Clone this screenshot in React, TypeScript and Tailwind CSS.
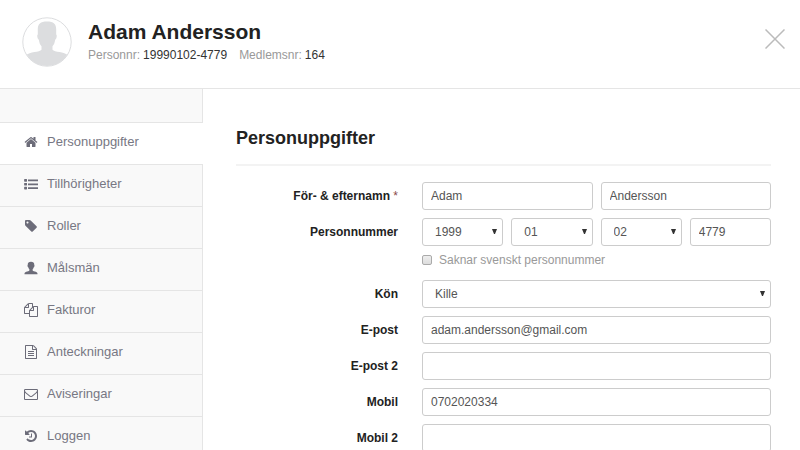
import React from "react";

interface NavItem {
  label: string;
  path: string;
  active?: boolean;
}

// Icon outlines live on a 1792 unit grid
const NAV_ITEMS: NavItem[] = [
  {
    label: "Personuppgifter",
    active: true,
    path: "M1472 992v480q0 26-19 45t-45 19h-384v-384H768v384H384q-26 0-45-19t-19-45V992q0-1 .5-3t.5-3l575-474 575 474q1 2 1 6zm223-69l-62 74q-8 9-21 11h-3q-13 0-21-7L896 424l-692 577q-12 8-24 7-13-2-21-11l-62-74q-8-10-7-23.500t11-21.500l719-599q32-26 76-26t76 26l244 204V288q0-14 9-23t23-9h192q14 0 23 9t9 23v408l219 182q10 8 11 21.500t-7 23.500z",
  },
  {
    label: "Tillhörigheter",
    path: "M80 256h256l48 48v240l-48 48H80l-64-48V304zM512 320h1280v224H512zM80 752h256l48 48v240l-48 48H80l-64-48V800zM512 816h1280v224H512zM80 1248h256l48 48v240l-48 48H80l-64-48V1296zM512 1312h1280v224H512z",
  },
  {
    label: "Roller",
    path: "M576 448q0-53-37.500-90.500T448 320t-90.500 37.500T320 448t37.500 90.500T448 576t90.500-37.500T576 448zm1067 576q0 53-37 90l-491 492q-39 37-91 37-53 0-90-37L219 890q-38-37-64.500-101T128 672V256q0-52 38-90t90-38h416q53 0 117 26.500T891 219l715 714q37 39 37 91z",
  },
  {
    label: "Målsmän",
    path: "M896 100c-270 0-430 140-420 400-60 40-30 220 50 260 30 130 80 220 160 290v150c-70 80-240 120-400 190-180 80-226 130-226 300h1672c0-170-46-220-226-300-160-70-330-110-400-190v-150c80-70 130-160 160-290 80-40 110-220 50-260 10-260-150-400-420-400z",
  },
  {
    label: "Fakturor",
    path: "M1696 384q40 0 68 28t28 68v1216q0 40-28 68t-68 28H736q-40 0-68-28t-28-68v-288H96q-40 0-68-28t-28-68V640q0-40 20-88t48-76L476 68q28-28 76-48t88-20h416q40 0 68 28t28 68v328q68-40 128-40h416zm-544 213L853 896h299V597zM512 213L213 512h299V213zm196 647l316-316V128H640v416q0 40-28 68t-68 28H128v640h512v-256q0-40 20-88t48-76zm956 804V512h-384v416q0 40-28 68t-68 28H768v640h896z",
  },
  {
    label: "Anteckningar",
    path: "M1596 380q28 28 48 76t20 88v1152q0 40-28 68t-68 28H224q-40 0-68-28t-28-68V96q0-40 28-68t68-28h896q40 0 88 20t76 48zm-444-244v376h376q-10-29-22-41l-313-313q-12-12-41-22zm384 1528V640h-416q-40 0-68-28t-28-68V128H256v1536h1280zM512 800q0-14 9-23t23-9h704q14 0 23 9t9 23v64q0 14-9 23t-23 9H544q-14 0-23-9t-9-23v-64zm736 224q14 0 23 9t9 23v64q0 14-9 23t-23 9H544q-14 0-23-9t-9-23v-64q0-14 9-23t23-9h704zm0 256q14 0 23 9t9 23v64q0 14-9 23t-23 9H544q-14 0-23-9t-9-23v-64q0-14 9-23t23-9h704z",
  },
  {
    label: "Aviseringar",
    path: "M1664 1504V736q-32 36-69 66-268 206-426 338-51 43-83 67t-86.500 48.500T897 1280h-2q-48 0-102.500-24.500T706 1207t-83-67Q465 1008 197 802q-37-30-69-66v768q0 13 9.500 22.500T160 1536h1472q13 0 22.500-9.500t9.500-22.500zm0-1051q0-37-9-53t-23-16H160q-13 0-22.500 9.500T128 416q0 168 147 284 193 152 401 317 6 5 35 29.500t46 37.500 44.500 31.500T852 1143t43 9h2q20 0 43-9t50.500-27.500 44.500-31.500 46-37.500 35-29.500q208-165 401-317 54-43 100.500-115.500T1664 453zm128-37v1088q0 66-47 113t-113 47H160q-66 0-113-47T0 1504V416q0-66 47-113t113-47h1472q66 0 113 47t47 113z",
  },
  {
    label: "Loggen",
    path: "M1664 896q0 156-61 298t-164 245-245 164-298 61q-172 0-327-72.500T305 1387q-7-10-6.500-22.500t8.500-20.500l137-138q10-9 25-9 16 2 23 12 73 95 179 147t225 52q104 0 198.500-40.500T1258 1258t109.500-163.500T1408 896t-40.500-198.500T1258 534t-163.500-109.500T896 384q-98 0-188 35.500T548 521l137 138q31 30 14 69-17 40-59 40H192q-26 0-45-19t-19-45V256q0-42 40-59 39-17 69 14l130 129q107-101 244.500-156.500T896 128q156 0 298 61t245 164 164 245 61 298zm-640-288v448q0 14-9 23t-23 9H672q-14 0-23-9t-9-23v-64q0-14 9-23t23-9h224V608q0-14 9-23t23-9h64q14 0 23 9t9 23z",
  },
];

const FIELD =
  "block h-7 w-full min-w-0 appearance-none rounded-[3px] border border-[#ccc] bg-white text-xs text-[#555] outline-none focus:border-[#66afe9]";

const SelectField: React.FC<{ id?: string; label?: string; options: string[] }> = ({ id, label, options }) => (
  <div className="relative min-w-0">
    <select id={id} aria-label={label} className={`${FIELD} pl-3 pr-5`}>
      {options.map((option) => (
        <option key={option}>{option}</option>
      ))}
    </select>
    <svg viewBox="0 0 5 5" className="pointer-events-none absolute top-[11px] right-1.5 h-[5px] w-[5px] fill-[#333]">
      <path d="M0 0h5L3 5H2z" />
    </svg>
  </div>
);

const FormRow: React.FC<{ label: string; htmlFor: string; required?: boolean; children: React.ReactNode }> = ({
  label,
  htmlFor,
  required,
  children,
}) => (
  <div className="grid grid-cols-[162px_1fr] gap-6">
    <label htmlFor={htmlFor} className="text-right text-xs leading-7 font-bold text-[#222]">
      {label}
      {required && <span className="font-normal text-[#8a4a4a]"> *</span>}
    </label>
    <div className="min-w-0">{children}</div>
  </div>
);

const Header: React.FC = () => (
  <header className="flex h-[89px] items-start justify-between border-b border-[#e5e5e5] bg-white pt-[17px] pr-[15px] pl-[22px]">
    <div className="flex gap-4">
      <svg viewBox="0 0 50 50" className="h-[50px] w-[50px]">
        <defs>
          <clipPath id="avatar">
            <circle cx="25" cy="25" r="24" />
          </clipPath>
        </defs>
        <path
          clipPath="url(#avatar)"
          fill="#dcdddf"
          d="M25 4.500c-7 0-9.500 2.500-9.200 9.500v3.500c-1 .3-.6 4.500 1 5.200.5 3 1.300 5.200 2.700 6.500v3.600C17.500 35.500 8 34.500 3.500 38.500V50h43V38.500C42 34.500 32.500 35.500 30.500 32.800v-3.600c1.400-1.300 2.200-3.500 2.700-6.500 1.600-.7 2-4.900 1-5.200V14c.3-7-2.200-9.500-9.200-9.500z"
        />
        <circle cx="25" cy="25" r="24.200" fill="none" stroke="#dcdddf" />
      </svg>
      <div>
        <h1 className="text-[21px] leading-[30px] font-bold text-[#222]">Adam Andersson</h1>
        <dl className="flex gap-3 text-xs leading-4">
          <div className="flex gap-[3px]">
            <dt className="text-[#999]">Personnr:</dt>
            <dd className="text-[#333]">19990102-4779</dd>
          </div>
          <div className="flex gap-[3px]">
            <dt className="text-[#999]">Medlemsnr:</dt>
            <dd className="text-[#333]">164</dd>
          </div>
        </dl>
      </div>
    </div>
    <button type="button" aria-label="Stäng" className="mt-3 cursor-pointer">
      <svg viewBox="0 0 20 20" className="h-5 w-5" fill="none" stroke="#bbb" strokeWidth="1.500">
        <path d="M.5.5l19 19M19.500.5l-19 19" />
      </svg>
    </button>
  </header>
);

const Sidebar: React.FC = () => (
  <nav className="w-[203px] shrink-0 border-r border-[#e5e5e5] bg-[#f9f9f9] pt-[33px]">
    <ul>
      {NAV_ITEMS.map((item) => (
        <li key={item.label} className={item.active ? "-mr-px bg-white" : ""}>
          <a
            href="#"
            aria-current={item.active ? "page" : undefined}
            className="flex h-[42px] items-center gap-[9px] border-t border-[#e5e5e5] pb-[3px] pl-6 text-[13px] text-[#777783]"
          >
            <svg viewBox="0 0 1792 1792" className="h-[14px] w-[14px] fill-[#6c6c79]">
              <path d={item.path} />
            </svg>
            {item.label}
          </a>
        </li>
      ))}
    </ul>
  </nav>
);

export default function App() {
  return (
    <div className="flex h-screen flex-col overflow-hidden bg-white font-['Liberation_Sans',Arial,sans-serif]">
      <Header />
      <div className="flex min-h-0 flex-1">
        <Sidebar />
        <main className="min-w-0 flex-1 pt-[37px] pr-[29px] pl-[33px]">
          <h2 className="border-b-2 border-[#f3f3f3] pb-[14px] text-lg leading-6 font-bold text-[#222]">
            Personuppgifter
          </h2>
          <form className="mt-4 space-y-2">
            <FormRow label="För- & efternamn" htmlFor="firstName" required>
              <div className="grid grid-cols-2 gap-2">
                <input id="firstName" type="text" defaultValue="Adam" className={`${FIELD} px-2`} />
                <input aria-label="Efternamn" type="text" defaultValue="Andersson" className={`${FIELD} px-2`} />
              </div>
            </FormRow>
            <FormRow label="Personnummer" htmlFor="birthYear">
              <div className="grid grid-cols-4 gap-2">
                <SelectField id="birthYear" options={["1999", "2000", "2001"]} />
                <SelectField label="Månad" options={["01", "02", "03"]} />
                <SelectField label="Dag" options={["02", "03", "04"]} />
                <input aria-label="Sista fyra" type="text" defaultValue="4779" className={`${FIELD} px-2`} />
              </div>
              <label className="mt-[5px] mb-[3px] flex items-center gap-[7px] text-xs leading-[18px] text-[#999]">
                <input
                  type="checkbox"
                  className="h-[10px] w-[10px] appearance-none rounded-[2px] border border-[#aaa] bg-linear-to-b from-[#eee] to-[#ddd] checked:bg-[#777]"
                />
                Saknar svenskt personnummer
              </label>
            </FormRow>
            <FormRow label="Kön" htmlFor="gender">
              <SelectField id="gender" options={["Kille", "Tjej"]} />
            </FormRow>
            <FormRow label="E-post" htmlFor="email">
              <input id="email" type="email" defaultValue="adam.andersson@gmail.com" className={`${FIELD} px-2`} />
            </FormRow>
            <FormRow label="E-post 2" htmlFor="email2">
              <input id="email2" type="email" className={`${FIELD} px-2`} />
            </FormRow>
            <FormRow label="Mobil" htmlFor="mobile">
              <input id="mobile" type="tel" defaultValue="0702020334" className={`${FIELD} px-2`} />
            </FormRow>
            <FormRow label="Mobil 2" htmlFor="mobile2">
              <input id="mobile2" type="tel" className={`${FIELD} px-2`} />
            </FormRow>
          </form>
        </main>
      </div>
    </div>
  );
}
